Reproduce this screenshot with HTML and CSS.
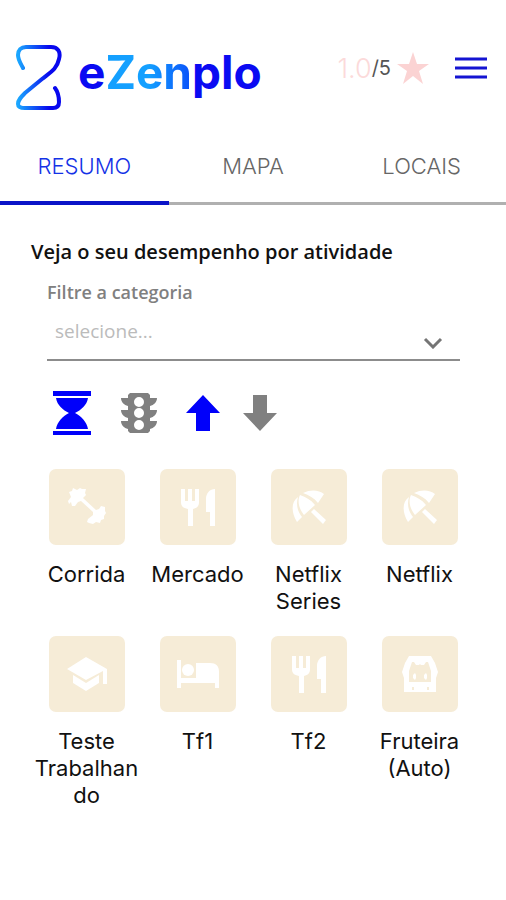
FILE: index.html
```html
<!DOCTYPE html>
<html lang="pt-BR">
<head>
  <meta charset="utf-8">
  <meta name="viewport" content="width=device-width, initial-scale=1">
  <title>eZenplo</title>
  <link rel="stylesheet" href="styles.css">
</head>
<body>
  <svg class="defs" aria-hidden="true">
    <symbol id="umbrella" viewBox="0 0 36 36">
      <path d="M9 6C15 8 20 11 24 16L13 26C8 20 6 12 9 6zM12 4C20 0 28 1 33 5L27 14C23 9 18 6 12 4zM7 8C0 13 0 23 6 33L11 28C6 22 5 15 7 8zM20 23l3-3 12 11-3 4z"/>
    </symbol>
    <symbol id="cutlery" viewBox="0 0 36 38">
      <path d="M1 1h4v12h3V1h4v12h3V1h4v13c0 4-2 6-6 7v17H8V21c-5-1-7-3-7-7zM35 1v37h-5V24h-4V11c0-6 4-10 9-10z"/>
    </symbol>
  </svg>

  <header class="header">
    <a class="brand" href="#">
      <svg class="brand-mark" viewBox="0 0 46 66" aria-hidden="true">
        <defs>
          <linearGradient id="mark" x1="0" x2="1" y1="0" y2="0">
            <stop offset="0" stop-color="#1aa7ff"/>
            <stop offset=".75" stop-color="#0808ee"/>
          </linearGradient>
        </defs>
        <path d="M7 24C5 20 2 16 2 11 2 6 5 3 10 3h25c7 0 10 5 8 12-2 10-8 13-17 20L9 49c-4 4-7 7-7 11 0 3 3 4 7 4h28c4 0 6-2 6-6 0-6-1-10-4-14" fill="none" stroke="url(#mark)" stroke-width="4" stroke-linecap="round"/>
      </svg>
      <span class="brand-name">e<span class="brand-accent">Zen</span>plo</span>
    </a>
    <div class="tools">
      <p class="rating"><span class="score">1.0</span><span class="scale">/5</span></p>
      <svg class="star" viewBox="0 0 32 32" aria-hidden="true"><path d="M16 0l4 12h12l-10 7 4 13-10-8-10 8 4-13L0 12h12z"/></svg>
      <button class="menu" type="button" aria-label="Menu">
        <svg viewBox="0 0 32 22" aria-hidden="true"><path d="M0 2h32M0 11h32M0 20h32"/></svg>
      </button>
    </div>
  </header>

  <nav class="tabs">
    <a class="tab tab-active" href="#" aria-current="page">RESUMO</a>
    <a class="tab" href="#">MAPA</a>
    <a class="tab" href="#">LOCAIS</a>
  </nav>

  <main class="content">
    <h1 class="title">Veja o seu desempenho por atividade</h1>
    <div class="filter">
      <label class="filter-label" for="category">Filtre a categoria</label>
      <div class="field">
        <select class="select" id="category"><option>selecione...</option></select>
        <svg class="chevron" viewBox="0 0 20 12" aria-hidden="true"><path d="M2 2l8 8 8-8"/></svg>
      </div>
    </div>

    <div class="sorts">
      <button class="sort sort-active" type="button" aria-label="Tempo">
        <svg width="40" height="46" viewBox="0 0 40 46" aria-hidden="true"><path d="M1 1h38v5H1zM4 8h32c-1 7-7 12-13 15 6 3 12 9 13 16H4c1-7 7-13 13-16C11 20 5 15 4 8zM1 41h38v4H1z"/></svg>
      </button>
      <button class="sort" type="button" aria-label="Semáforo">
        <svg width="38" height="42" viewBox="0 0 38 42" aria-hidden="true"><path fill-rule="evenodd" d="M10 1h18l2 2v3h7c0 4-3 7-7 8v4h7c0 4-3 7-7 8v3h7c0 4-3 7-7 8v2l-2 2H10l-2-2v-2c-4-1-7-4-7-8h7v-3c-4-1-7-4-7-8h7v-4C4 13 1 10 1 6h7V3zM19 5a5 5 0 1 0 0 10 5 5 0 0 0 0-10zm0 11a5 5 0 1 0 0 10 5 5 0 0 0 0-10zm0 12a5 5 0 1 0 0 10 5 5 0 0 0 0-10z"/></svg>
      </button>
      <div class="arrows">
        <button class="sort sort-active" type="button" aria-label="Crescente">
          <svg width="34" height="36" viewBox="0 0 34 36" aria-hidden="true"><path d="M17 0l17 18H24v18H10V18H0z"/></svg>
        </button>
        <button class="sort" type="button" aria-label="Decrescente">
          <svg width="34" height="36" viewBox="0 0 34 36" aria-hidden="true"><path d="M10 0h14v18h10L17 36 0 18h10z"/></svg>
        </button>
      </div>
    </div>

    <div class="grid">
      <a class="item" href="#">
        <span class="tile"><svg width="38" height="38" viewBox="0 0 38 38" aria-hidden="true"><path d="M1 4l3-1 1-3 4 2 3-2 2 1 4 0-1 4 1 2-3 3 13 12 3-1 2-3 4 1 0 4 1 2-2 3 0 3-3 1-1 3-4-1-3 2-4-1-2-1 1-3 5-4 0-3-12-11-3 1-3 4-3 0-1-4-2 2-1-3 3-4z"/></svg></span>
        <span class="label">Corrida</span>
      </a>
      <a class="item" href="#">
        <span class="tile"><svg width="36" height="38" aria-hidden="true"><use href="#cutlery"/></svg></span>
        <span class="label">Mercado</span>
      </a>
      <a class="item" href="#">
        <span class="tile"><svg width="36" height="36" aria-hidden="true"><use href="#umbrella"/></svg></span>
        <span class="label">Netflix Series</span>
      </a>
      <a class="item" href="#">
        <span class="tile"><svg width="36" height="36" aria-hidden="true"><use href="#umbrella"/></svg></span>
        <span class="label">Netflix</span>
      </a>
      <a class="item" href="#">
        <span class="tile"><svg width="40" height="34" viewBox="0 0 40 34" aria-hidden="true"><path d="M19 0l21 12v15h-4V14L19 23 0 12zM6 18l13 8 13-8v8l-13 8-13-8z"/></svg></span>
        <span class="label">Teste Trabalhando</span>
      </a>
      <a class="item" href="#">
        <span class="tile"><svg width="42" height="30" viewBox="0 0 42 30" aria-hidden="true"><path d="M0 1h4v18h15V4h14c6 0 9 3 9 9v16h-4v-5H4v5H0z"/><circle cx="11" cy="11" r="6"/></svg></span>
        <span class="label">Tf1</span>
      </a>
      <a class="item" href="#">
        <span class="tile"><svg width="36" height="38" aria-hidden="true"><use href="#cutlery"/></svg></span>
        <span class="label">Tf2</span>
      </a>
      <a class="item" href="#">
        <span class="tile"><svg width="38" height="36" viewBox="0 0 38 36" aria-hidden="true"><path fill-rule="evenodd" d="M8 0h22l4 7 3 9-2 6v14H3V22l-2-6 3-9zM11 6l-3 9v11h22V15l-3-9h-2l-2 3h-3l-1-1-1 1h-3l-2-3zM11 31v3h2v-3zM26 31v3h2v-3z"/><path d="M12 19l2-2 1 2v3l-1 2-2-2zM23 19l2-2 1 2v3l-1 2-2-2z"/></svg></span>
        <span class="label">Fruteira (Auto)</span>
      </a>
    </div>
  </main>
</body>
</html>
```

FILE: styles.css
```css
* { box-sizing: border-box; }

body {
  margin: 0;
  background: #fff;
  color: #111;
  font-family: Inter, "Liberation Sans", sans-serif;
}

a { color: inherit; text-decoration: none; }
button { padding: 0; border: 0; background: none; color: inherit; cursor: pointer; }
svg { display: block; }
.defs { display: none; }

.header {
  display: flex;
  justify-content: space-between;
  align-items: flex-start;
  padding: 44px 19px 0 16px;
}

.brand { display: flex; align-items: flex-start; gap: 16px; }
.brand-mark { width: 46px; height: 66px; }
.brand-name { color: #0a0af2; font-size: 46px; font-weight: 700; line-height: 56px; }
.brand-accent {
  background: linear-gradient(90deg, #14a0ff 50%, #0a50fa);
  background-clip: text;
  -webkit-background-clip: text;
  color: transparent;
}

.tools { display: flex; align-items: center; height: 48px; }
.rating { display: flex; align-items: center; margin: 0; }
.score { color: #fcdada; font-size: 27px; font-weight: 300; }
.scale { color: #555; font-size: 20px; }
.star { width: 32px; height: 32px; margin: 0 26px 0 6px; fill: #fbd3d3; }
.menu svg { width: 32px; height: 22px; stroke: #1414d2; stroke-width: 3; }

.tabs {
  display: grid;
  grid-template-columns: repeat(3, 1fr);
  margin-top: 18px;
  box-shadow: inset 0 -3px #b0b0b0;
}
.tab {
  padding: 24px 0 21px;
  border-bottom: 4px solid transparent;
  color: #666;
  font-size: 22px;
  font-weight: 300;
  line-height: 28px;
  text-align: center;
}
.tab-active { border-color: #0a14c8; color: #1432e6; }

.content { padding: 33px 31px; }
.title, .filter-label { font-family: "Open Sans", "Noto Sans", sans-serif; font-weight: 600; line-height: 28px; }
.title { margin: 0; font-size: 20px; }
.filter { margin: 12px 15px 0 16px; }
.filter-label { display: block; color: #808080; font-size: 18px; }
.field { position: relative; }
.select {
  display: block;
  width: 100%;
  height: 55px;
  padding: 0 40px 4px 8px;
  border: 0;
  border-bottom: 2px solid #8c8c8c;
  border-radius: 0;
  appearance: none;
  background: none;
  color: #bbb;
  font-family: "Open Sans", "Noto Sans", sans-serif;
  font-size: 19px;
}
.chevron {
  position: absolute;
  right: 17px;
  bottom: 12px;
  width: 20px;
  height: 12px;
  fill: none;
  stroke: #757575;
  stroke-width: 3;
  pointer-events: none;
}

.sorts { display: flex; align-items: center; gap: 28px; margin: 29px 21px 0; }
.arrows { display: flex; gap: 23px; }
.sort { fill: #808080; }
.sort-active { fill: #0000fa; }

.grid {
  display: grid;
  grid-template-columns: repeat(4, 1fr);
  row-gap: 21px;
  margin-top: 33px;
}
.item { display: flex; flex-direction: column; align-items: center; gap: 16px; }
.tile {
  display: grid;
  place-items: center;
  width: 76px;
  height: 76px;
  border-radius: 7px;
  background: #f6ecd7;
  fill: #fff;
}
.label {
  width: 100%;
  padding: 0 3px;
  font-size: 22px;
  line-height: 27px;
  text-align: center;
  overflow-wrap: anywhere;
}
```
